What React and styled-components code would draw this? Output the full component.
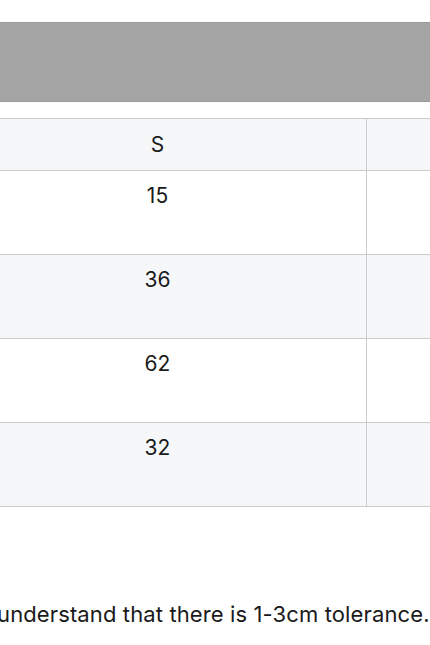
import React from "react";
import styled, { createGlobalStyle } from "styled-components";

const Global = createGlobalStyle`
  html, body { margin: 0; padding: 0; background: #fff; }
  body { font-family: Inter, "Noto Sans", sans-serif; color: #1a1a1a; overflow: hidden; }
`;

const Page = styled.div`
  width: 430px;
  height: 645px;
  overflow: hidden;
  padding-top: 22px;
  box-sizing: border-box;
`;

const Banner = styled.div`
  height: 78px;
  background: #a5a5a5;
  border-top: 1px solid #9c9c9c;
  border-bottom: 1px solid #9c9c9c;
`;

const Scroller = styled.div`
  margin-top: 16px;
  margin-left: -52px;
  width: 700px;
`;

const Table = styled.table`
  border-collapse: collapse;
  table-layout: fixed;
  width: 700px;
  font-size: 21px;
`;

const Col = styled.col`
  width: ${(p) => p.$w}px;
`;

const HeadCell = styled.th`
  height: 51px;
  padding: 0;
  font-weight: 400;
  text-align: center;
  vertical-align: middle;
  background: #f6f7f9;
  border: 1px solid #cccccc;
  line-height: 24px;
`;

const Row = styled.tr`
  background: ${(p) => (p.$alt ? "#f6f7f9" : "#ffffff")};
`;

const Cell = styled.td`
  height: 84px;
  box-sizing: border-box;
  padding: 13px 0 0;
  text-align: center;
  vertical-align: top;
  border: 1px solid #cccccc;
  line-height: 24px;
`;

const Note = styled.p`
  margin: 94px 0 0 -3px;
  font-size: 22px;
  line-height: 26px;
  letter-spacing: 0.12px;
  white-space: nowrap;
`;

const rows = ["15", "36", "62", "32"];

export default function App() {
  return (
    <>
      <Global />
      <Page>
        <Banner />
        <Scroller>
          <Table>
            <colgroup>
              <Col $w={418} />
              <Col $w={282} />
            </colgroup>
            <thead>
              <tr>
                <HeadCell>S</HeadCell>
                <HeadCell></HeadCell>
              </tr>
            </thead>
            <tbody>
              {rows.map((v, i) => (
                <Row key={i} $alt={i % 2 === 1}>
                  <Cell>{v}</Cell>
                  <Cell></Cell>
                </Row>
              ))}
            </tbody>
          </Table>
        </Scroller>
        <Note>understand that there is 1-3cm tolerance.</Note>
      </Page>
    </>
  );
}
